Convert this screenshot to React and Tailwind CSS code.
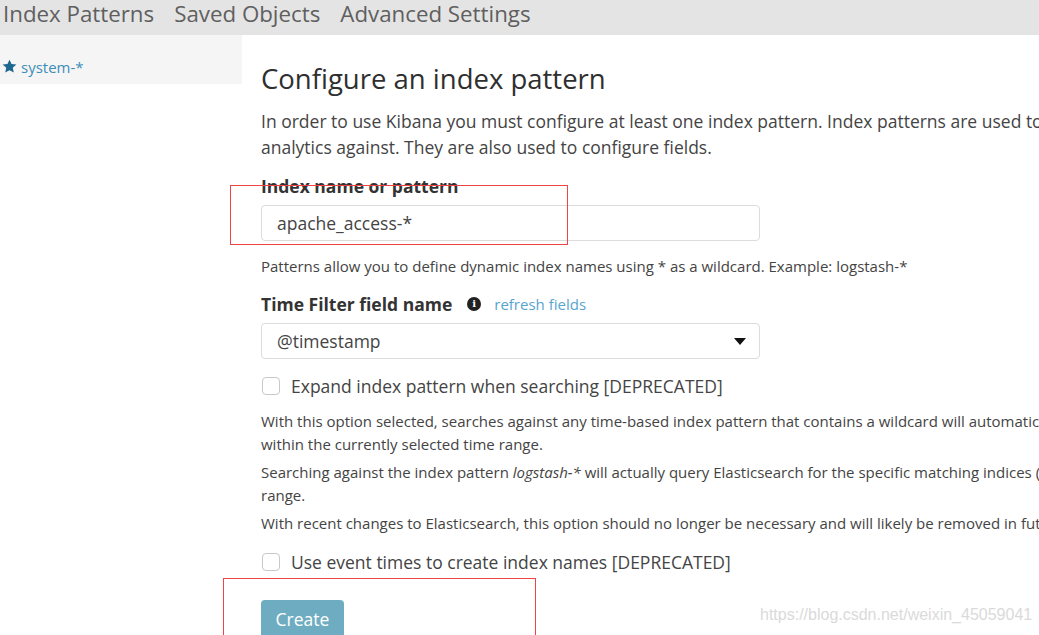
export default function App() {
  const sans = { fontFamily: '"Open Sans", "Noto Sans", sans-serif' };
  return (
    <div className="relative w-[1039px] h-[635px] overflow-hidden bg-white text-[#444]" style={sans}>
      {/* top nav */}
      <div className="h-[35px] bg-[#e4e4e4] flex items-start gap-[20px] pl-[3px] text-[22.3px] leading-[27px] text-[#5f5f5f]">
        <span>Index Patterns</span>
        <span>Saved Objects</span>
        <span>Advanced Settings</span>
      </div>
      <div className="flex">
        {/* sidebar */}
        <div className="w-[242px] shrink-0">
          <div className="h-[49px] bg-[#f5f5f5] pt-[22px] pl-[2px] flex items-start gap-[4px] text-[15px] leading-[20px]">
            <svg width="15" height="15" viewBox="0 0 24 24" className="mt-[2px]">
              <path fill="#1d6890" d="M12 1l3.3 7.1 7.7.8-5.8 5.2 1.7 7.6L12 17.8l-6.9 3.9 1.7-7.6L1 8.9l7.7-.8z" />
            </svg>
            <span className="text-[#3d8dba]">system-*</span>
          </div>
        </div>
        {/* main */}
        <div className="pl-[19px] w-[797px] shrink-0">
          <h1 className="mt-[26px] text-[27.5px] leading-[36px] text-[#2f2f2f] font-normal whitespace-nowrap">Configure an index pattern</h1>
          <p className="mt-[11px] text-[17.5px] leading-[26px] whitespace-nowrap">
            In order to use Kibana you must configure at least one index pattern. Index patterns are used to identify the Elasticsearch index to run search and
            <br />
            analytics against. They are also used to configure fields.
          </p>
          <div className="mt-[14px] text-[17.5px] leading-[24px] font-bold text-[#333]">Index name or pattern</div>
          <div className="mt-[7px] w-[499px] h-[36px] border border-[#dcdcdc] rounded-[4px] flex items-center pl-[15px] text-[17.5px] text-[#444]">
            apache_access-*
          </div>
          <div className="mt-[15px] text-[15px] leading-[20px] whitespace-nowrap">
            Patterns allow you to define dynamic index names using * as a wildcard. Example: logstash-*
          </div>
          <div className="mt-[16px] flex items-center text-[17.5px] leading-[24px]">
            <span className="font-bold text-[#333]">Time Filter field name</span>
            <span className="ml-[15px] w-[14px] h-[14px] rounded-full bg-[#222] text-white text-[10px] leading-[14px] font-bold flex items-center justify-center" style={{ fontFamily: '"DejaVu Serif", serif' }}>i</span>
            <span className="ml-[13px] text-[15px] text-[#57a5cf]">refresh fields</span>
          </div>
          <div className="mt-[7px] w-[499px] h-[36px] border border-[#dcdcdc] rounded-[4px] flex items-center justify-between pl-[15px] pr-[13px] text-[17.5px] text-[#444]">
            <span>@timestamp</span>
            <svg width="12" height="7" viewBox="0 0 12 7"><path d="M0 0h12L6 7z" fill="#111" /></svg>
          </div>
          <div className="mt-[15px] h-[24px] flex items-center text-[17.5px]">
            <span className="ml-[1px] w-[18px] h-[18px] border border-[#c8c8c8] rounded-[4px] bg-white" />
            <span className="ml-[11px]">Expand index pattern when searching [DEPRECATED]</span>
          </div>
          <div className="text-[15px] leading-[23px] whitespace-nowrap">
            <p className="mt-[12px]">
              With this option selected, searches against any time-based index pattern that contains a wildcard will automatically be expanded to query only the indices that contain data
              <br />
              within the currently selected time range.
            </p>
            <p className="mt-[5px]">
              Searching against the index pattern <i>logstash-*</i> will actually query Elasticsearch for the specific matching indices (e.g. logstash-2015.12.21) that fall within the current time
              <br />
              range.
            </p>
            <p className="mt-[5px]">
              With recent changes to Elasticsearch, this option should no longer be necessary and will likely be removed in future versions of Kibana.
            </p>
          </div>
          <div className="mt-[15px] h-[24px] flex items-center text-[17.5px]">
            <span className="ml-[1px] w-[18px] h-[18px] border border-[#c8c8c8] rounded-[4px] bg-white" />
            <span className="ml-[11px]">Use event times to create index names [DEPRECATED]</span>
          </div>
          <button className="mt-[26px] w-[83px] h-[38px] rounded-[4px] bg-[#6eadc1] text-white text-[17.5px] leading-[36px]">
            Create
          </button>
        </div>
      </div>

      {/* annotation boxes */}
      <div className="absolute left-[230px] top-[185px] w-[338px] h-[60px] border border-[#ee4444]" />
      <div className="absolute left-[223px] top-[578px] w-[313px] h-[80px] border border-[#ee4444]" />

      {/* watermark */}
      <div className="absolute left-[760px] top-[605px] text-[16px] leading-[20px] text-[#dadada]" style={{ fontFamily: '"Liberation Sans", Arial, sans-serif' }}>
        https://blog.csdn.net/weixin_45059041
      </div>
    </div>
  );
}
